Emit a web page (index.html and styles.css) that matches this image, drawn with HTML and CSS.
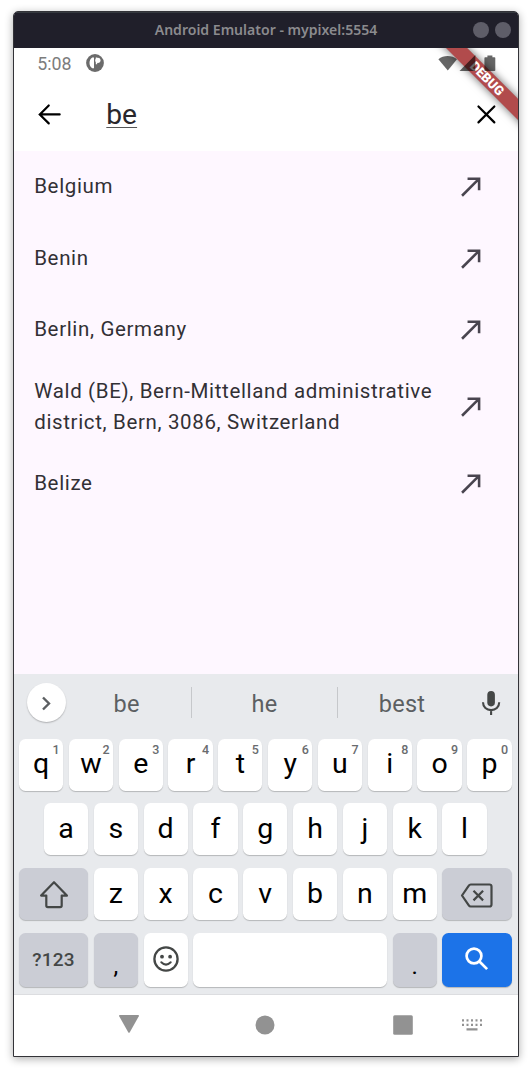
FILE: index.html
```html
<!DOCTYPE html>
<html lang="en">
<head>
<meta charset="utf-8">
<title>Android Emulator - mypixel:5554</title>
<link rel="stylesheet" href="styles.css">
</head>
<body>
<svg width="0" height="0" class="defs">
  <symbol id="call-made" viewBox="0 0 24 24"><path d="M9 5v2h6.59L4 18.59 5.41 20 17 8.41V15h2V5z"/></symbol>
</svg>
<main class="window">
  <header class="titlebar">
    <span class="title">Android Emulator - mypixel:5554</span>
    <span class="dots"><i class="dot"></i><i class="dot"></i></span>
  </header>
  <div class="screen">
    <div class="statusbar">
      <span class="clock">5:08</span>
      <svg class="app-badge" viewBox="0 0 18 18"><circle cx="9" cy="9" r="8.9" fill="#6b6b6b"/><path d="M8 3.500v10.800H6.300C4.400 13.200 3.500 11.200 3.500 9s.9-4.300 2.800-5.500zM9.800 3.500h1.400v6.800H9.800z" fill="#fff"/><circle cx="11.900" cy="6.300" r="2.600" fill="#fff"/></svg>
      <svg class="signals" viewBox="0 0 58 18"><g fill="#000" fill-opacity=".6"><path d="M.4 4.200C5.500-.1 14 .1 19 4.200L9.800 15.600z"/><path d="M21.500 16 37.300 0v16z"/><path d="M47.200 2.300h2.200V.5h5v1.800h2.100q.8 0 .8.800v12.100q0 .8-.8.800h-9.300q-.8 0-.8-.8V3.100q0-.8.800-.8z"/></g></svg>
    </div>
    <div class="searchbar">
      <svg class="back" viewBox="0 0 24 24"><path d="M20 12H4.800M11.500 5 4.500 12l7 7"/></svg>
      <span class="query"><span class="composing">be</span></span>
      <svg class="close" viewBox="0 0 24 24"><path d="m5.800 5.800 12.400 12.400M18.200 5.800 5.800 18.200"/></svg>
    </div>
    <ul class="results">
      <li class="result"><span>Belgium</span><svg class="icon"><use href="#call-made"/></svg></li>
      <li class="result"><span>Benin</span><svg class="icon"><use href="#call-made"/></svg></li>
      <li class="result"><span>Berlin, Germany</span><svg class="icon"><use href="#call-made"/></svg></li>
      <li class="result tall"><span>Wald (BE), Bern-Mittelland administrative<br>district, Bern, 3086, Switzerland</span><svg class="icon"><use href="#call-made"/></svg></li>
      <li class="result"><span>Belize</span><svg class="icon"><use href="#call-made"/></svg></li>
    </ul>
    <section class="keyboard">
      <div class="suggestions">
        <span class="expand"><svg viewBox="0 0 20 20"><path d="m7 4.500 6 6-6 6"/></svg></span>
        <span class="word">be</span>
        <span class="word mid">he</span>
        <span class="word">best</span>
        <svg class="mic" viewBox="0 0 20 26"><rect x="6.300" y="1" width="7.600" height="15.400" rx="3.800" fill="#444746"/><path d="M2 12.300c0 4.900 3.600 7.800 8.100 7.800s8.100-2.900 8.100-7.800M10.100 20v5" fill="none" stroke="#444746" stroke-width="2.100"/></svg>
      </div>
      <div class="keys">
        <div class="row">
          <span class="key">q<sup>1</sup></span><span class="key">w<sup>2</sup></span><span class="key">e<sup>3</sup></span><span class="key">r<sup>4</sup></span><span class="key">t<sup>5</sup></span><span class="key">y<sup>6</sup></span><span class="key">u<sup>7</sup></span><span class="key">i<sup>8</sup></span><span class="key">o<sup>9</sup></span><span class="key">p<sup>0</sup></span>
        </div>
        <div class="row">
          <span class="key inset">a</span><span class="key">s</span><span class="key">d</span><span class="key">f</span><span class="key">g</span><span class="key">h</span><span class="key">j</span><span class="key">k</span><span class="key">l</span>
        </div>
        <div class="row">
          <span class="key wide gray"><svg class="shift" viewBox="0 0 30 30"><path d="M15 2.200 27.900 15.600h-5.200v10q0 1.500-1.500 1.500H8.800q-1.500 0-1.500-1.500v-10H2.100z"/></svg></span><span class="key">z</span><span class="key">x</span><span class="key">c</span><span class="key">v</span><span class="key">b</span><span class="key">n</span><span class="key">m</span><span class="key wide gray"><svg class="backspace" viewBox="0 0 34 28"><path d="M10.800 2.500h18.700q2 0 2 2v18q0 2-2 2H10.800q-1.300 0-2-1.100L2 13.500 8.800 3.600q.7-1.100 2-1.100zM13.500 8.800l9.600 9.600M23.100 8.800l-9.600 9.600"/></svg></span>
        </div>
        <div class="row last">
          <span class="key wide gray symbols">?123</span><span class="key gray punct">,</span><span class="key"><svg class="emoji" viewBox="0 0 28 28"><circle cx="14" cy="14" r="11.600" fill="none" stroke="#444746" stroke-width="2.300"/><circle cx="10" cy="11.700" r="1.900" fill="#444746"/><circle cx="18.100" cy="11.700" r="1.900" fill="#444746"/><path d="M9.300 17.300q4.700 4.700 9.400 0" fill="none" stroke="#444746" stroke-width="2" stroke-linecap="round"/></svg></span><span class="key space"></span><span class="key gray punct">.</span><span class="key wide blue"><svg class="search" viewBox="0 0 26 26"><circle cx="10" cy="10" r="7.400"/><path d="m15.200 15.200 7.900 7.900"/></svg></span>
        </div>
      </div>
    </section>
    <nav class="navbar">
      <svg class="nav-back" viewBox="0 0 22 20"><path d="M2 1h18q1.500 0 .8 1.300L11.800 18.200q-.8 1.300-1.600 0L1.200 2.300Q.5 1 2 1z"/></svg>
      <svg class="nav-home" viewBox="0 0 20 20"><circle cx="10" cy="10" r="9.500"/></svg>
      <svg class="nav-recent" viewBox="0 0 20 20"><rect x=".2" y=".2" width="19.600" height="19.600" rx="1.500"/></svg>
      <svg class="nav-ime" viewBox="0 0 20 12"><path d="M0 .3h2v2.200H0zM4.500.3h2v2.200h-2zM9 .3h2v2.200H9zM13.500.3h2v2.200h-2zM18 .3h2v2.200h-2zM0 4.800h2V7H0zM4.500 4.800h2V7h-2zM9 4.800h2V7H9zM13.500 4.800h2V7h-2zM18 4.800h2V7h-2zM4.500 9.300h11v2.200h-11z"/></svg>
    </nav>
    <div class="ribbon-clip"><span class="ribbon">DEBUG</span></div>
  </div>
</main>
</body>
</html>
```
FILE: styles.css
```css
* { box-sizing: border-box; }
body {
  margin: 0;
  padding: 11px 13px;
  height: 1073px;
  overflow: hidden;
  background: #fff;
  font-family: Roboto, sans-serif;
}
svg { display: block; flex: none; }
.defs { position: absolute; }
.window {
  width: 506px;
  height: 1046px;
  display: flex;
  flex-direction: column;
  border: 1px solid #333338;
  border-radius: 5px 5px 0 0;
  overflow: hidden;
  box-shadow: 0 2px 8px rgba(0, 0, 0, .32);
}
.titlebar {
  flex: none;
  height: 36px;
  display: grid;
  place-items: center;
  background: #201f2a;
  border-top: 1px solid #363a40;
}
.title {
  grid-area: 1 / 1;
  padding-bottom: 3px;
  color: #8b8b8e;
  font: 600 14.050px "Noto Sans", sans-serif;
  white-space: nowrap;
}
.dots { grid-area: 1 / 1; justify-self: end; display: flex; gap: 6px; padding: 0 7px 2px 0; }
.dot { width: 16px; height: 16px; border-radius: 50%; background: #5e5d68; }
.screen {
  position: relative;
  flex: 1;
  display: flex;
  flex-direction: column;
  background: #fff;
}
.statusbar {
  height: 31px;
  display: flex;
  align-items: center;
  padding: 0 22.500px 0 23.300px;
}
.clock { color: #7c7c7c; font-size: 17.800px; line-height: 31px; }
.app-badge { width: 18px; height: 18px; margin: 0 0 1px 14px; }
.signals { position: relative; z-index: 2; width: 58px; height: 18px; margin-left: auto; }
.searchbar {
  height: 71.600px;
  display: flex;
  align-items: center;
  padding: 0 16px 0 20px;
}
.back, .close { width: 30.800px; height: 30.800px; fill: none; stroke: #000; stroke-width: 1.700; stroke-linecap: round; }
.query { flex: 1; margin-left: 41.500px; font-size: 28.200px; line-height: 34px; color: #29272c; }
.composing { text-decoration: underline #555; text-decoration-thickness: 1.300px; text-underline-offset: 2.500px; }
.results {
  flex: 1;
  margin: 0;
  padding: 0;
  list-style: none;
  background: #fef7ff;
}
.result {
  height: 71.900px;
  display: flex;
  align-items: center;
  justify-content: space-between;
  padding: 0 30.800px 1px 20.200px;
  font-size: 20.500px;
  line-height: 30.800px;
  letter-spacing: .65px;
  color: #323035;
  white-space: nowrap;
}
.tall { height: 82px; }
.icon { width: 30.800px; height: 30.800px; fill: #49454f; }
.keyboard {
  flex: none;
  height: 321.500px;
  background: #e8eaed;
  border-bottom: 1px solid #dcdde0;
}
.suggestions {
  height: 65px;
  display: grid;
  grid-template-columns: 12.500px 39px 125.500px 147px 128px 1fr;
  align-items: center;
  padding-bottom: 7px;
}
.expand {
  grid-column: 2;
  width: 39px;
  height: 39px;
  display: grid;
  place-items: center;
  border-radius: 50%;
  background: #fff;
  box-shadow: 0 1px 1.500px rgba(0, 0, 0, .25);
}
.expand svg { width: 20px; height: 20px; fill: none; stroke: #5c5f62; stroke-width: 2.400; }
.word { height: 31px; line-height: 34px; text-align: center; font-size: 23.500px; letter-spacing: .3px; color: #5c5f62; }
.word:not(.mid) { padding-right: 3px; }
.word.mid ~ .word { padding-right: 0; }
.mid { border: solid #c6c8cb; border-width: 0 1px; }
.mic { width: 20px; height: 26px; margin-left: 15px; }
.keys { display: grid; gap: 12.900px; padding: 0 6.500px 0 5px; }
.row {
  height: 52px;
  display: grid;
  grid-template-columns: repeat(20, 1fr);
  column-gap: 5.600px;
}
.last { height: 53.500px; }
.key {
  position: relative;
  grid-column: span 2;
  display: flex;
  align-items: center;
  justify-content: center;
  padding-bottom: 1.500px;
  border-radius: 6.500px;
  background: #fff;
  box-shadow: 0 1px 1px rgba(0, 0, 0, .22);
  color: #000;
  font-size: 28.500px;
  line-height: 34px;
}
.key sup { position: absolute; top: 3px; right: 3.500px; font-size: 12.500px; font-weight: 500; line-height: 15px; color: #696b6e; }
.inset { grid-column: 2 / span 2; }
.wide { grid-column: span 3; }
.space { grid-column: span 8; }
.gray { background: #cbcdd5; }
.blue { background: #1c73e8; }
.symbols { font-size: 19px; letter-spacing: .3px; padding-bottom: 0; color: #444746; font-weight: 500; }
.punct { align-items: flex-end; padding-bottom: 4px; font-size: 24px; }
.shift, .backspace { fill: none; stroke: #444746; stroke-width: 2.200; stroke-linejoin: round; }
.shift { width: 30px; height: 30px; margin-top: 2px; }
.backspace { width: 34px; height: 28px; margin-top: 4px; }
.emoji { width: 28px; height: 28px; }
.search { width: 26px; height: 26px; fill: none; stroke: #fff; stroke-width: 2.700; }
.navbar {
  flex: none;
  height: 61px;
  display: grid;
  grid-template-columns: 183px 90px 184px 1fr;
  align-items: center;
  justify-items: center;
  padding-bottom: 2px;
  fill: #929292;
}
.nav-back { width: 22px; height: 20px; margin: 0 0 1px 46px; }
.nav-home { width: 20px; height: 20px; margin-left: 46px; }
.nav-recent { width: 20px; height: 20px; margin-left: 48px; }
.nav-ime { width: 20px; height: 12px; justify-self: start; margin-left: -9px; }
.ribbon-clip { position: absolute; inset: 0 0 auto auto; width: 120px; height: 120px; overflow: hidden; }
.ribbon {
  position: absolute;
  left: 19px;
  top: 22.800px;
  width: 140px;
  height: 15.400px;
  transform: rotate(45deg);
  background: #b14b4c;
  box-shadow: 0 0 8px rgba(0, 0, 0, .6);
  color: #fff;
  font-size: 13px;
  font-weight: 900;
  line-height: 15.400px;
  text-align: center;
}
```
